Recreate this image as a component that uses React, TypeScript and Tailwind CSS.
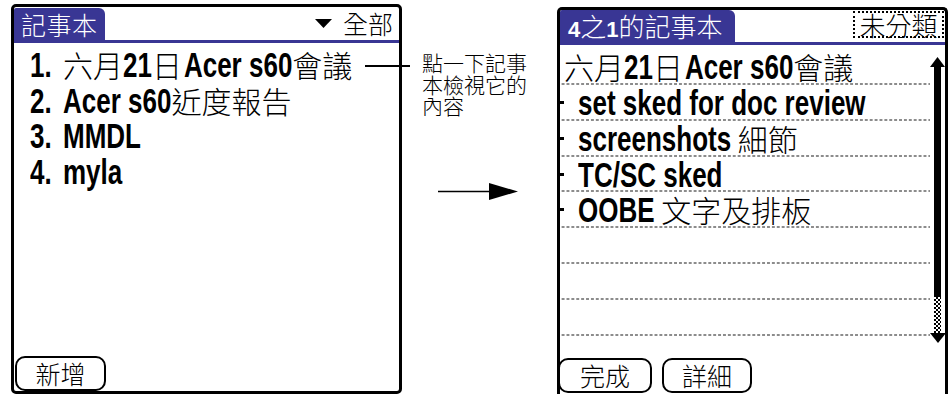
import React from "react";

function L({ children, className = "" }: { children: React.ReactNode; className?: string }) {
  return (
    <span
      className={
        "inline-block font-bold leading-none scale-y-[1.36] origin-[50%_85%] text-[26px] font-['Liberation_Sans',sans-serif] " +
        className
      }
    >
      {children}
    </span>
  );
}

const dotRow =
  "bg-[image:linear-gradient(to_right,#8c8c8c_50%,transparent_50%)] bg-[length:4.9px_2px] bg-repeat-x bg-bottom";

function LeftRow({ n, children }: { n: string; children: React.ReactNode }) {
  return (
    <div className="flex h-[35.5px] leading-[35.5px] text-[30px] whitespace-nowrap">
      <div className="w-[33px] ml-[16px]">
        <L>{n}</L>
      </div>
      <div>{children}</div>
    </div>
  );
}

function RightRow({ tick, children }: { tick?: boolean; children?: React.ReactNode }) {
  return (
    <div className={"flex h-[35.86px] " + dotRow}>
      {tick ? (
        <div className="w-[6px] h-[3px] bg-black -ml-[2px] mt-[16px] mr-[14px] shrink-0" />
      ) : (
        <div className="w-[4px] shrink-0" />
      )}
      <div className="leading-[34px] text-[30px] whitespace-nowrap">{children}</div>
    </div>
  );
}

export default function App() {
  return (
    <div className="w-[950px] h-[394px] overflow-hidden bg-white flex items-start font-['Noto_Sans_CJK_TC',sans-serif] font-light text-black">
      {/* Left screen */}
      <div className="ml-[11px] mt-[4px] w-[391px] h-[390px] shrink-0 border-[3px] border-black rounded-[5px] flex flex-col">
        <div className="flex items-end justify-between h-[36px] border-b-[3px] border-[#393694]">
          <div className="h-[32px] w-[91px] bg-[#393694] rounded-tr-[6px] rounded-tl-[2px] text-white text-[25px] leading-[32px] pl-[7px] tracking-[0.5px]">
            記事本
          </div>
          <div className="self-stretch flex items-center gap-[11px] pr-[6px]">
            <svg width="17" height="9" viewBox="0 0 17 9">
              <polygon points="0,0 17,0 8.5,9" fill="#000" />
            </svg>
            <span className="text-[25px] leading-[33px]">全部</span>
          </div>
        </div>
        <div className="pt-[4px]">
          <LeftRow n="1.">
            六月<L>21</L>日<L className="ml-[2px]">Acer s60</L>會議
          </LeftRow>
          <LeftRow n="2.">
            <L>Acer s60</L>近度報告
          </LeftRow>
          <LeftRow n="3.">
            <L>MMDL</L>
          </LeftRow>
          <LeftRow n="4.">
            <L>myla</L>
          </LeftRow>
        </div>
        <div className="mt-auto ml-[1px] w-[91px] h-[35px] border-2 border-black rounded-[10px] flex items-center justify-center text-[25px] leading-none">
          新增
        </div>
      </div>

      {/* Annotation */}
      <div className="relative w-[155px] h-full shrink-0 pt-[52px] pl-[20px]">
        <div className="absolute left-[-37px] top-[65px] w-[45px] h-[2px] bg-black" />
        <div className="text-[21px] leading-[21.5px] whitespace-nowrap">
          <div>點一下記事</div>
          <div>本檢視它的</div>
          <div>內容</div>
        </div>
        <svg className="mt-[66px] ml-[16px]" width="80" height="17" viewBox="0 0 80 17">
          <line x1="0" y1="8.5" x2="52" y2="8.5" stroke="#000" strokeWidth="1.6" />
          <polygon points="51,0 80,8.5 51,17" fill="#000" />
        </svg>
      </div>

      {/* Right screen */}
      <div className="mt-[7px] w-[391px] h-[400px] shrink-0 border-[3px] border-b-0 border-black rounded-t-[5px] flex flex-col">
        <div className="flex items-end justify-between h-[35px] border-b-[3px] border-[#393694]">
          <div className="h-[32px] w-[175px] bg-[#393694] rounded-tr-[6px] rounded-tl-[2px] text-white text-[26px] leading-[32px] pl-[8px] whitespace-nowrap">
            <span className="font-bold text-[22px] font-['Liberation_Sans',sans-serif]">4</span>之
            <span className="font-bold text-[22px] font-['Liberation_Sans',sans-serif]">1</span>的記事本
          </div>
          <div className="self-start mt-[1px] mr-[1px] w-[91px] h-[27px] border-2 border-dotted border-black flex items-center justify-center text-[26px] leading-none">
            未分類
          </div>
        </div>
        <div className="flex h-[291px]">
          <div className="w-[370px] pt-[4px]">
            <RightRow>
              六月<L>21</L>日<L className="ml-[2px]">Acer s60</L>會議
            </RightRow>
            <RightRow tick>
              <L>set sked for doc review</L>
            </RightRow>
            <RightRow tick>
              <L>screenshots</L> 細節
            </RightRow>
            <RightRow tick>
              <L>TC/SC sked</L>
            </RightRow>
            <RightRow tick>
              <L>OOBE</L> 文字及排板
            </RightRow>
            <RightRow />
            <RightRow />
            <RightRow />
          </div>
          <div className="w-[15px] h-[298px] shrink-0 flex flex-col items-center pt-[12px]">
            <svg className="shrink-0" width="15" height="10" viewBox="0 0 15 10">
              <polygon points="7.5,0 15,10 0,10" fill="#000" />
            </svg>
            <div className="w-[7px] h-[230px] bg-black shrink-0" />
            <div className="w-[7px] h-[36px] shrink-0 bg-[image:repeating-conic-gradient(#000_0_25%,#fff_0_50%)] bg-[length:4px_4px]" />
            <svg className="shrink-0" width="16" height="10" viewBox="0 0 16 10">
              <polygon points="0,0 16,0 8,10" fill="#000" />
            </svg>
          </div>
        </div>
        <div className="flex gap-[10px] mt-[22px] -ml-[2px]">
          <div className="w-[94px] h-[35px] border-2 border-black rounded-[10px] flex items-center justify-center text-[25px] leading-none">
            完成
          </div>
          <div className="w-[90px] h-[35px] border-2 border-black rounded-[10px] flex items-center justify-center text-[25px] leading-none">
            詳細
          </div>
        </div>
      </div>
    </div>
  );
}
